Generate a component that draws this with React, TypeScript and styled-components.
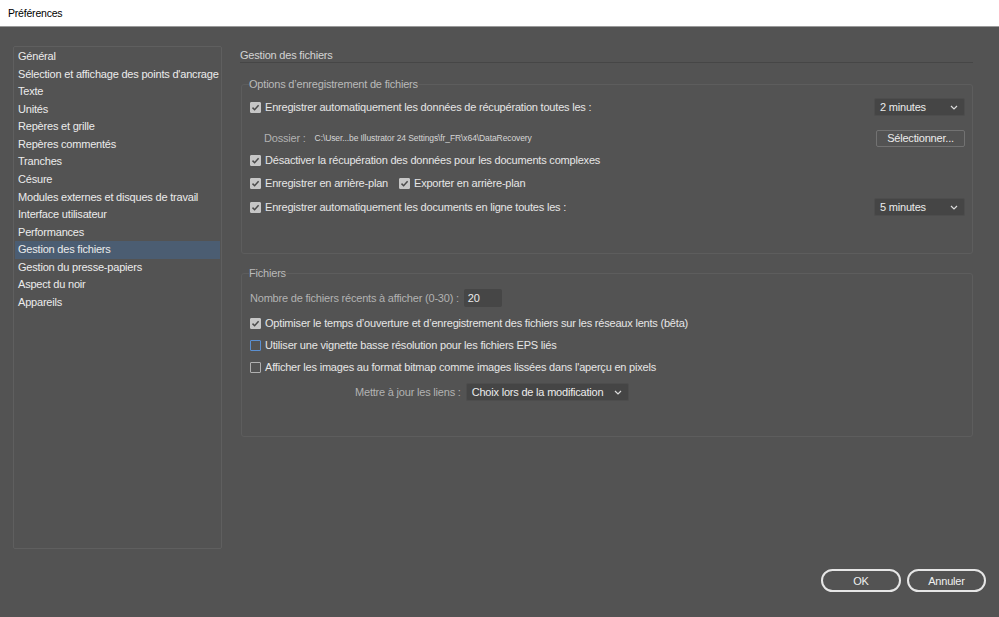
import React from "react";
import styled, { createGlobalStyle } from "styled-components";

const Global = createGlobalStyle`
  html, body { margin: 0; padding: 0; background: #535353; }
  body { font-family: "Liberation Sans", Arial, sans-serif; font-size: 11px; letter-spacing: -0.2px; color: #e6e6e6; }
  * { box-sizing: border-box; }
`;

const Window = styled.div`
  width: 999px;
  height: 617px;
  display: flex;
  flex-direction: column;
  background: #535353;
  overflow: hidden;
`;

const TitleBar = styled.div`
  height: 27px;
  flex: none;
  background: #ffffff;
  border-bottom: 1px solid #9a9a9a;
  display: flex;
  align-items: center;
  padding-left: 8px;
  color: #000;
  font-size: 10.5px;
  letter-spacing: -0.2px;
`;

const Body = styled.div`
  display: flex;
  padding: 19px 26px 0 13px;
`;

const Sidebar = styled.ul`
  list-style: none;
  margin: 0;
  padding: 1px 1px 0 1px;
  width: 209px;
  height: 503px;
  flex: none;
  border: 1px solid #5f5f5f;
  border-radius: 2px;
`;

const NavItem = styled.li<{ $active?: boolean }>`
  height: 17.57px;
  line-height: 17.57px;
  padding-left: 3px;
  color: #ececec;
  white-space: nowrap;
  background: ${(p) => (p.$active ? "#4b5d72" : "transparent")};
`;

const Main = styled.div`
  flex: 1;
  margin-left: 18px;
  display: flex;
  flex-direction: column;
`;

const PageTitle = styled.div`
  color: #d4d4d4;
  line-height: 14px;
  padding: 2px 0 0 0;
  border-bottom: 1px solid #464646;
`;

const Group = styled.fieldset<{ $mt: number; $pt: number; $pb: number }>`
  margin: ${(p) => p.$mt}px 0 0 1px;
  padding: ${(p) => p.$pt}px 7px ${(p) => p.$pb}px 8px;
  border: 1px solid #5d5d5d;
  border-radius: 3px;
  min-width: 0;
`;

const Legend = styled.legend`
  padding: 0;
  margin-left: -1px;
  color: #bababa;
  line-height: 14px;
`;

const Row = styled.div<{ $mt?: number; $pl?: number }>`
  display: flex;
  align-items: center;
  height: 22px;
  margin-top: ${(p) => p.$mt ?? 0}px;
  padding-left: ${(p) => p.$pl ?? 0}px;
  gap: 5px;
`;

const Label = styled.label`
  display: flex;
  align-items: center;
  gap: 4px;
  white-space: nowrap;
`;

const Box = styled.span<{ $checked?: boolean; $focus?: boolean }>`
  width: 11px;
  height: 11px;
  flex: none;
  border-radius: 1px;
  display: inline-flex;
  align-items: center;
  justify-content: center;
  background: ${(p) => (p.$checked ? "#c6c6c6" : "transparent")};
  border: 1px solid ${(p) => (p.$focus ? "#5b8fd0" : p.$checked ? "#c6c6c6" : "#b0b0b0")};
`;

const Spacer = styled.div<{ $w?: number }>`
  flex: ${(p) => (p.$w ? "none" : 1)};
  width: ${(p) => p.$w ?? 0}px;
`;

const Select = styled.div<{ $w: number }>`
  width: ${(p) => p.$w}px;
  height: 18px;
  flex: none;
  background: #454545;
  border: 1px solid #4d4d4d;
  border-radius: 2px;
  display: flex;
  align-items: center;
  padding: 0 6px 0 5px;
  color: #ececec;
  justify-content: space-between;
`;

const Button = styled.div<{ $w: number }>`
  width: ${(p) => p.$w}px;
  height: 17px;
  flex: none;
  border: 1px solid #727272;
  border-radius: 2px;
  display: flex;
  align-items: center;
  justify-content: center;
  color: #ececec;
`;

const Muted = styled.span`
  color: #b2b2b2;
  white-space: nowrap;
`;

const Path = styled.span`
  font-size: 8.5px;
  letter-spacing: -0.1px;
  color: #d6d6d6;
  white-space: nowrap;
  margin-left: 4px;
`;

const Input = styled.div`
  width: 38px;
  height: 18px;
  flex: none;
  background: #464646;
  border-radius: 2px;
  display: flex;
  align-items: center;
  padding-left: 4px;
  color: #ececec;
`;

const Footer = styled.div`
  display: flex;
  justify-content: flex-end;
  gap: 6px;
  padding: 20px 13px 0 0;
`;

const Pill = styled.button<{ $w: number }>`
  width: ${(p) => p.$w}px;
  height: 23px;
  border: 2px solid #e6e6e6;
  border-radius: 12px;
  background: transparent;
  color: #f0f0f0;
  font-family: inherit;
  font-size: 11px;
  letter-spacing: -0.2px;
  padding: 0;
`;

const Check = () => (
  <svg width="9" height="9" viewBox="0 0 9 9">
    <path d="M1.5 4.6 L3.6 6.7 L7.6 2.2" fill="none" stroke="#4a4a4a" strokeWidth="1.5" />
  </svg>
);

const Chevron = () => (
  <svg width="8" height="5" viewBox="0 0 8 5">
    <path d="M1 1 L4 4 L7 1" fill="none" stroke="#dcdcdc" strokeWidth="1.2" />
  </svg>
);

const CB = ({ checked, focus, children }: { checked?: boolean; focus?: boolean; children: React.ReactNode }) => (
  <Label>
    <Box $checked={checked} $focus={focus}>{checked && <Check />}</Box>
    {children}
  </Label>
);

const nav = [
  "Général",
  "Sélection et affichage des points d'ancrage",
  "Texte",
  "Unités",
  "Repères et grille",
  "Repères commentés",
  "Tranches",
  "Césure",
  "Modules externes et disques de travail",
  "Interface utilisateur",
  "Performances",
  "Gestion des fichiers",
  "Gestion du presse-papiers",
  "Aspect du noir",
  "Appareils",
];

export default function App() {
  return (
    <Window>
      <Global />
      <TitleBar>Préférences</TitleBar>
      <Body>
        <Sidebar>
          {nav.map((n) => (
            <NavItem key={n} $active={n === "Gestion des fichiers"}>{n}</NavItem>
          ))}
        </Sidebar>
        <Main>
          <PageTitle>Gestion des fichiers</PageTitle>
          <Group $mt={14} $pt={5} $pb={35}>
            <Legend>Options d’enregistrement de fichiers</Legend>
            <Row>
              <CB checked>Enregistrer automatiquement les données de récupération toutes les :</CB>
              <Spacer />
              <Select $w={91}>2 minutes<Chevron /></Select>
            </Row>
            <Row $mt={9} $pl={14}>
              <Muted>Dossier :</Muted>
              <Path>C:\User...be Illustrator 24 Settings\fr_FR\x64\DataRecovery</Path>
              <Spacer />
              <Button $w={89}>Sélectionner...</Button>
            </Row>
            <Row>
              <CB checked>Désactiver la récupération des données pour les documents complexes</CB>
            </Row>
            <Row $mt={1}>
              <CB checked>Enregistrer en arrière-plan</CB>
              <Spacer $w={1} />
              <CB checked>Exporter en arrière-plan</CB>
            </Row>
            <Row $mt={2}>
              <CB checked>Enregistrer automatiquement les documents en ligne toutes les :</CB>
              <Spacer />
              <Select $w={91}>5 minutes<Chevron /></Select>
            </Row>
          </Group>
          <Group $mt={12} $pt={7} $pb={33}>
            <Legend>Fichiers</Legend>
            <Row>
              <Muted>Nombre de fichiers récents à afficher (0-30) :</Muted>
              <Input>20</Input>
            </Row>
            <Row $mt={3}>
              <CB checked>Optimiser le temps d’ouverture et d’enregistrement des fichiers sur les réseaux lents (bêta)</CB>
            </Row>
            <Row>
              <CB focus>Utiliser une vignette basse résolution pour les fichiers EPS liés</CB>
            </Row>
            <Row>
              <CB>Afficher les images au format bitmap comme images lissées dans l'aperçu en pixels</CB>
            </Row>
            <Row $mt={3} $pl={105}>
              <Muted>Mettre à jour les liens :</Muted>
              <Select $w={163}>Choix lors de la modification<Chevron /></Select>
            </Row>
          </Group>
        </Main>
      </Body>
      <Footer>
        <Pill $w={80}>OK</Pill>
        <Pill $w={79}>Annuler</Pill>
      </Footer>
    </Window>
  );
}
